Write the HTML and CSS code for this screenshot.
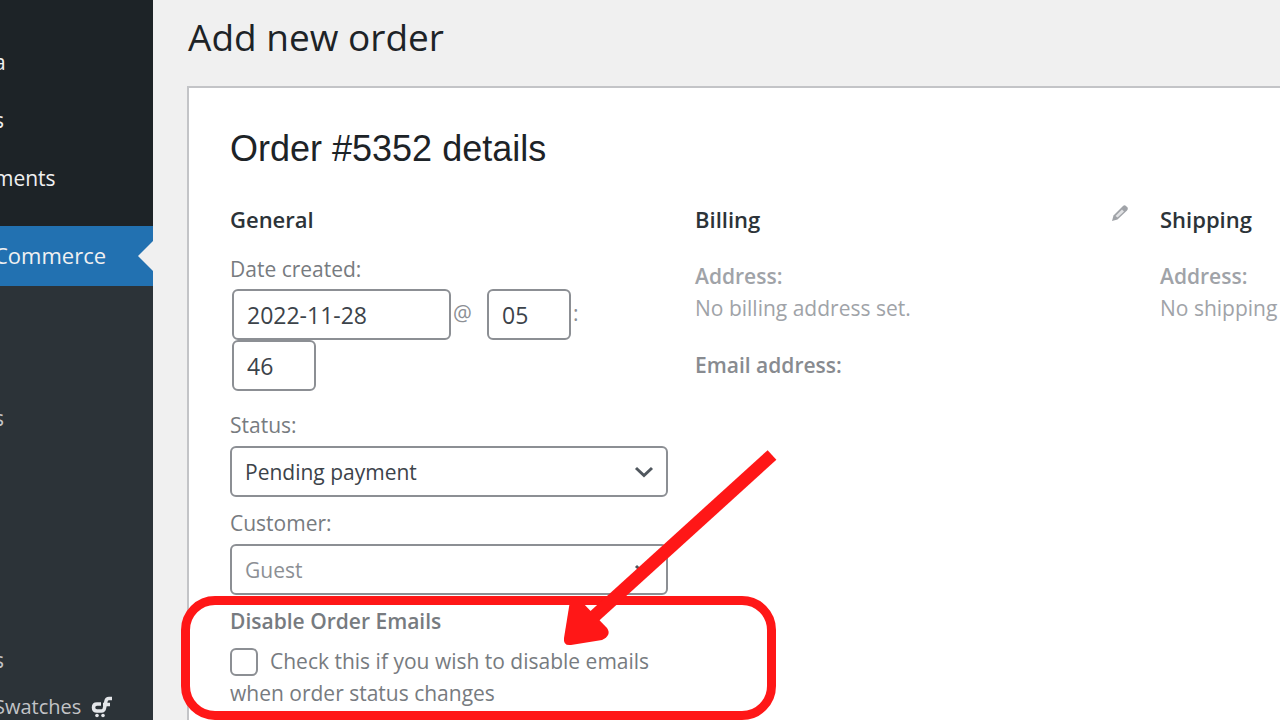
FILE: index.html
```html
<!DOCTYPE html>
<html lang="en">
<head>
<meta charset="utf-8">
<title>Add new order</title>
<link rel="stylesheet" href="styles.css">
</head>
<body>
<div class="app">
  <nav class="sidebar">
    <ul class="menu">
      <li><a href="#">a</a></li>
      <li><a href="#">s</a></li>
      <li><a href="#">ments</a></li>
    </ul>
    <a class="current" href="#">Commerce</a>
    <ul class="submenu">
      <li class="first"><a href="#">s</a></li>
      <li class="second"><a href="#">s</a></li>
      <li><a href="#">Swatches
        <svg class="cart" viewBox="0 0 22 22" aria-hidden="true"><g fill="none" stroke="#e4e6e9" stroke-width="3.500"><path d="M10 8H6Q2.500 8 2.500 11.500T6 15H10.500Q13 15 13.500 12L15 5Q15.500 2.500 18 2.500H21"/><path d="M12 8.500H19"/></g><circle cx="6" cy="19.500" r="1.800" fill="#e4e6e9"/><circle cx="12" cy="19.500" r="1.800" fill="#e4e6e9"/></svg></a></li>
    </ul>
  </nav>
  <main class="main">
    <h1 class="title">Add new order</h1>
    <section class="card">
      <h2 class="heading">Order #5352 details</h2>
      <div class="columns">
        <form class="general">
          <h3>General</h3>
          <label class="label" for="date">Date created:</label>
          <div class="date-row">
            <input id="date" class="box date" type="text" value="2022-11-28"><span class="at">@</span><input class="box short" type="text" aria-label="Hour" value="05"><span class="colon">:</span><input class="box short" type="text" aria-label="Minute" value="46">
          </div>
          <label class="label" for="status">Status:</label>
          <div class="select">
            <select id="status" class="box"><option>Pending payment</option></select>
            <svg class="chevron" viewBox="0 0 20 12" aria-hidden="true"><path d="M2 2L10 9.500L18 2" fill="none" stroke="#50575e" stroke-width="3"/></svg>
          </div>
          <label class="label customer" for="customer">Customer:</label>
          <div class="select">
            <select id="customer" class="box guest"><option>Guest</option></select>
            <svg class="chevron" viewBox="0 0 20 12" aria-hidden="true"><path d="M2 2L10 9.500L18 2" fill="none" stroke="#50575e" stroke-width="3"/></svg>
          </div>
          <h4 class="emails">Disable Order Emails</h4>
          <label class="check"><input type="checkbox">Check this if you wish to disable emails when order status changes</label>
        </form>
        <section class="address">
          <h3>Billing
            <button type="button" class="edit" aria-label="Edit billing"><svg viewBox="0 0 18 18"><path d="M1 17L2.500 11.500L12 2Q13.500 .500 15 2L16.500 3.500Q17.500 5 16 6.500L6.500 15.500Z" fill="#a0a3a8"/><path d="M4.500 12L11 5.500L13 7.500L6.500 13.500Z" fill="#e1e2e4"/></svg></button></h3>
          <p><strong>Address:</strong><br>No billing address set.</p>
          <p class="email"><strong>Email address:</strong></p>
        </section>
        <section class="address">
          <h3>Shipping</h3>
          <p><strong>Address:</strong><br>No shipping</p>
        </section>
      </div>
    </section>
  </main>
  <div class="highlight"></div>
  <svg class="arrow" viewBox="0 0 220 204" aria-hidden="true"><path d="M212 14L28 181" stroke="#ff1717" stroke-width="13"/><path d="M20 159L47 187Q52 194 42 199L11 204Q3 205 4 197L10 160Q14 153 20 159Z" fill="#ff1717"/></svg>
</div>
</body>
</html>
```
FILE: styles.css
```css
* { box-sizing: border-box; }
body {
  margin: 0;
  background: #f0f0f0;
  color: #2c3338;
  font: 21px/32px "Open Sans", "Noto Sans", sans-serif;
}
.app {
  position: relative;
  display: flex;
  height: 100vh;
  min-height: 720px;
  overflow: hidden;
}
ul, h1, h2, h3, h4, p { margin: 0; padding: 0; }
ul { list-style: none; }

.sidebar {
  flex: 0 0 153px;
  background: #2c3338;
  overflow: hidden;
}
.sidebar a {
  display: block;
  margin-left: -6px;
  color: #f0f0f1;
  text-decoration: none;
  white-space: nowrap;
}
.menu {
  height: 226px;
  padding-top: 33px;
  background: #1d2327;
}
.menu li { height: 58px; line-height: 58px; }
.sidebar .current {
  position: relative;
  background: #2271b1;
  font-size: 22px;
  line-height: 59px;
  padding-bottom: 1px;
}
.current::after {
  content: "";
  position: absolute;
  top: 15px;
  right: 0;
  border: 15px solid transparent;
  border-left: 0;
  border-right-color: #f0f0f0;
}
.submenu { padding-top: 116px; }
.submenu a { color: #c3c4c7; }
.submenu .first { height: 242px; }
.submenu .second { height: 47px; }
.submenu li:last-child { font-size: 20px; }
.cart { width: 22px; height: 22px; margin-left: 4px; vertical-align: -4px; }

.main { flex: 1; min-width: 0; padding-left: 34px; }
.title {
  padding: 11px 0 23px 1px;
  font-size: 37px;
  font-weight: 400;
  line-height: 52px;
  color: #1d2327;
}
.card {
  height: 100%;
  padding: 39px 0 0 41px;
  background: #fff;
  border: solid #c3c4c7;
  border-width: 2px 0 0 2px;
  overflow: hidden;
}
.heading {
  margin-bottom: 32px;
  font: 400 36px/44px "Liberation Sans", Arial, sans-serif;
  color: #1d2327;
}
.columns {
  display: grid;
  grid-template-columns: repeat(3, minmax(438px, 1fr));
  gap: 27px;
}
h3 { font-size: 22px; font-weight: 600; line-height: 32px; }

.label { display: block; margin-top: 18px; color: #777b80; }
.box {
  height: 51px;
  padding: 0 13px;
  border: 2px solid #8c8f94;
  border-radius: 6px;
  background: #fff;
  color: #3c434a;
  font: inherit;
}
.date-row {
  display: flex;
  flex-wrap: wrap;
  align-items: center;
  padding: 4px 0 0 2px;
  color: #8c8f94;
}
.date-row .box { font-size: 23px; }
.date { width: 219px; }
.short { width: 84px; }
.at, .colon { height: 36px; padding-left: 2px; }
.at { width: 36px; }
.colon { width: 60px; }
.select { position: relative; margin-top: 5px; }
.select .box { display: block; width: 100%; appearance: none; }
.select .guest { color: #8c8f94; }
.chevron { position: absolute; top: 20px; right: 14px; width: 20px; height: 12px; }
.customer { margin-top: 10px; }
.emails { margin-top: 10px; font-size: 21px; font-weight: 600; color: #777b80; }
.check { display: block; margin-top: 8px; color: #777b80; }
.check input {
  appearance: none;
  width: 28px;
  height: 28px;
  margin: 0 12px 0 0;
  border: 2px solid #8c8f94;
  border-radius: 6px;
  vertical-align: -7px;
}
.address { color: #a0a3a8; }
.address h3 { display: flex; justify-content: space-between; color: #2c3338; }
.address p { margin-top: 25px; line-height: 32px; }
.address strong { font-weight: 600; }
.address .email { color: #888b90; }
.edit { margin-right: 4px; padding: 0; border: 0; background: none; height: 20px; }
.edit svg { display: block; width: 18px; height: 18px; }

.highlight {
  position: absolute;
  left: 181px;
  top: 596px;
  width: 595px;
  height: 124px;
  border: 9px solid #ff1717;
  border-radius: 34px;
}
.arrow { position: absolute; left: 560px; top: 441px; width: 220px; height: 204px; overflow: visible; }
```
